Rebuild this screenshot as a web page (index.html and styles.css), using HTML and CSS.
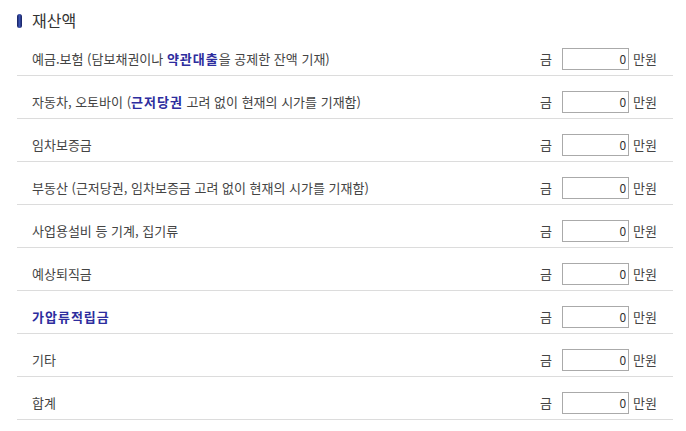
FILE: index.html
```html
<!DOCTYPE html>
<html lang="ko">
<head>
<meta charset="utf-8">
<title>재산액</title>
<link rel="stylesheet" href="styles.css">
</head>
<body>
<div class="panel">
  <h2 class="title"><span class="bullet"></span>재산액</h2>
  <div class="row">
    <div class="label">예금.보험 (담보채권이나 <b class="em">약관대출</b>을 공제한 잔액 기재)</div>
    <div class="amount"><span class="pre">금</span><input class="box" type="text" value="0"><span class="unit">만원</span></div>
  </div>
  <div class="row">
    <div class="label">자동차, 오토바이 (<b class="em">근저당권</b> 고려 없이 현재의 시가를 기재함)</div>
    <div class="amount"><span class="pre">금</span><input class="box" type="text" value="0"><span class="unit">만원</span></div>
  </div>
  <div class="row">
    <div class="label">임차보증금</div>
    <div class="amount"><span class="pre">금</span><input class="box" type="text" value="0"><span class="unit">만원</span></div>
  </div>
  <div class="row">
    <div class="label">부동산 (근저당권, 임차보증금 고려 없이 현재의 시가를 기재함)</div>
    <div class="amount"><span class="pre">금</span><input class="box" type="text" value="0"><span class="unit">만원</span></div>
  </div>
  <div class="row">
    <div class="label">사업용설비 등 기계, 집기류</div>
    <div class="amount"><span class="pre">금</span><input class="box" type="text" value="0"><span class="unit">만원</span></div>
  </div>
  <div class="row">
    <div class="label">예상퇴직금</div>
    <div class="amount"><span class="pre">금</span><input class="box" type="text" value="0"><span class="unit">만원</span></div>
  </div>
  <div class="row">
    <div class="label"><b class="em">가압류적립금</b></div>
    <div class="amount"><span class="pre">금</span><input class="box" type="text" value="0"><span class="unit">만원</span></div>
  </div>
  <div class="row">
    <div class="label">기타</div>
    <div class="amount"><span class="pre">금</span><input class="box" type="text" value="0"><span class="unit">만원</span></div>
  </div>
  <div class="row">
    <div class="label">합계</div>
    <div class="amount"><span class="pre">금</span><input class="box" type="text" value="0"><span class="unit">만원</span></div>
  </div>
</div>
</body>
</html>
```

FILE: styles.css
```css
* { box-sizing: border-box; }
body {
  margin: 0;
  background: #fff;
  font-family: "Noto Sans CJK KR", "Noto Sans", sans-serif;
  color: #444;
}
.panel {
  width: 673px;
  padding-left: 17px;
}
.title {
  margin: 0;
  height: 33px;
  padding-top: 10px;
  display: flex;
  align-items: flex-start;
  line-height: 21px;
  font-size: 16px;
  font-weight: normal;
  color: #333;
}
.bullet {
  display: inline-block;
  width: 5px;
  height: 14px;
  margin-top: 4px;
  margin-right: 10px;
  border-radius: 3px;
  background: linear-gradient(to right, #16205e, #3a52b0 50%, #16205e);
}
.row {
  height: 43px;
  padding-top: 9px;
  display: flex;
  align-items: center;
  justify-content: space-between;
  border-bottom: 1px solid #dcdcdc;
  font-size: 13px;
}
.label {
  padding-left: 15px;
  line-height: 16px;
  color: #444;
}
.em {
  color: #2d2d9e;
  font-weight: bold;
  letter-spacing: 1px;
}
.amount {
  display: flex;
  align-items: center;
  padding-right: 16px;
  color: #444;
}
.pre {
  margin-right: 10px;
}
.box {
  width: 67px;
  height: 22px;
  margin: 0 4px 0 0;
  padding: 0 2px 0 0;
  border: 1px solid #aaa;
  background: #fff;
  text-align: right;
  font-family: "Noto Sans CJK KR", "Noto Sans", sans-serif;
  font-size: 12px;
  color: #333;
  outline: none;
}
.unit {
  color: #444;
}
```
